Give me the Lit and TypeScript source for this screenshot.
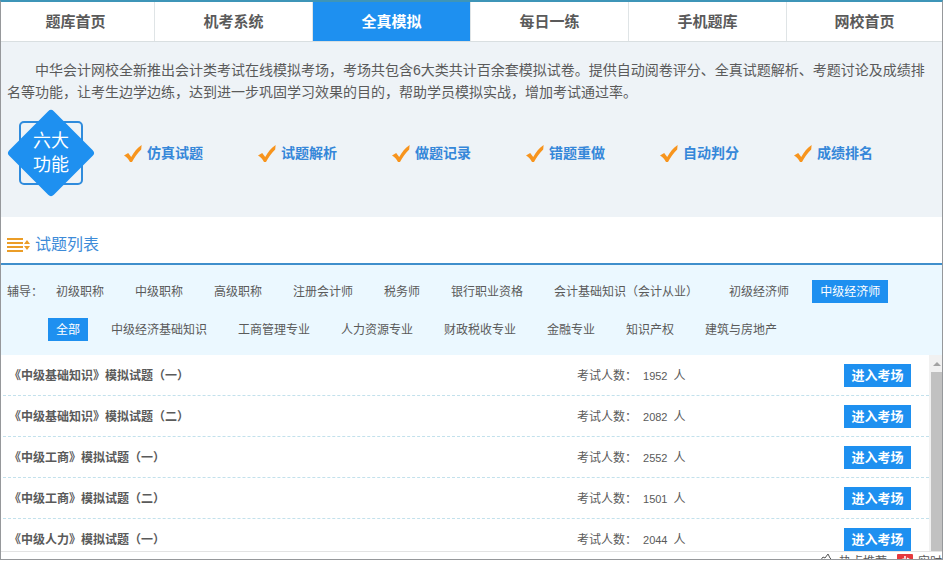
import { LitElement, html, css, svg } from "lit";
import { customElement } from "lit/decorators.js";
import { classMap } from "lit/directives/class-map.js";

const tabs = ["题库首页", "机考系统", "全真模拟", "每日一练", "手机题库", "网校首页"];
const features = ["仿真试题", "试题解析", "做题记录", "错题重做", "自动判分", "成绩排名"];
const courses = [
  "初级职称", "中级职称", "高级职称", "注册会计师", "税务师",
  "银行职业资格", "会计基础知识（会计从业）", "初级经济师", "中级经济师",
];
const subjects = [
  "全部", "中级经济基础知识", "工商管理专业", "人力资源专业",
  "财政税收专业", "金融专业", "知识产权", "建筑与房地产",
];
const exams = [
  { title: "《中级基础知识》模拟试题（一）", count: 1952 },
  { title: "《中级基础知识》模拟试题（二）", count: 2082 },
  { title: "《中级工商》模拟试题（一）", count: 2552 },
  { title: "《中级工商》模拟试题（二）", count: 1501 },
  { title: "《中级人力》模拟试题（一）", count: 2044 },
];

const tick = svg`<path d="M0 10.5 4.2 8 7.2 12 C10 7 13 3 17.6 0 L17.2 4.6 C13.6 8 10.6 12.2 8 17 L6 17 C4.6 14.4 2.6 12 0 10.5Z" fill="#f7941d"/>`;

@customElement("app-root")
export class AppRoot extends LitElement {
  static styles = css`
    :host {
      display: block;
      font: 12px/22px "Liberation Sans", "Noto Sans CJK SC", sans-serif;
      color: #5a5a5a;
      background: #fff;
    }
    a { color: inherit; text-decoration: none; }
    ul { list-style: none; margin: 0; padding: 0; }
    p, h2 { margin: 0; }
    .frame {
      margin-right: 1px;
      border: 1px solid #96989b;
      border-top: 2px solid #3e95b8;
    }
    .tabs {
      display: grid;
      grid-template-columns: 154fr repeat(4, 158fr) 155fr;
      border-bottom: 1px solid #d9dfe1;
    }
    .tab {
      box-sizing: border-box;
      border-right: 1px solid #dfe4e6;
      font-size: 15px;
      font-weight: bold;
      line-height: 39px;
      text-align: center;
    }
    .tab:first-child { padding-right: 4px; }
    .tab:last-child { border-right: 0; }
    .tab.active { background: #1e90f0; color: #fff; }
    .intro { background: #eef3f7; padding: 17px 14px 20px 6px; }
    .lead { font-size: 14px; line-height: 22px; text-indent: 28px; }
    .showcase { display: flex; align-items: center; gap: 29px; margin-top: 6px; }
    .badge { display: grid; flex: none; width: 88px; height: 88px; place-items: center; }
    .badge svg, .badge span { grid-area: 1 / 1; }
    .badge span { color: #fff; font-size: 18px; line-height: 24px; text-align: center; }
    .features { display: flex; flex: 1; }
    .features li {
      display: flex;
      flex: 1;
      align-items: center;
      gap: 5px;
      color: #3587d9;
      font-size: 14px;
      font-weight: bold;
      white-space: nowrap;
    }
    .heading {
      display: flex;
      align-items: center;
      gap: 5px;
      padding: 16px 6px 6px;
      border-bottom: 2px solid #3f8fcc;
      color: #3d8bd8;
      font-size: 16px;
      font-weight: normal;
      line-height: 24px;
    }
    .filters {
      display: grid;
      grid-template-columns: 41px 1fr;
      row-gap: 15px;
      padding: 15px 6px 14px;
      background: #ebf8ff;
    }
    .label { padding-top: 1px; }
    .options { display: flex; gap: 15px; grid-column: 2; white-space: nowrap; }
    .option { display: block; padding: 1px 8px 0; }
    .option.active { background: #1e90f0; color: #fff; }
    .results { display: flex; border-bottom: 1px solid #e3e3e3; }
    .exams { flex: 1; padding-left: 2px; }
    .exam {
      display: grid;
      grid-template-columns: 1fr 267px 67px;
      padding: 9px 18px 8px 6px;
      border-bottom: 1px dashed #c3e1ec;
    }
    .exam:last-child { padding-bottom: 0; border-bottom: 0; }
    .title { padding-top: 1px; font-weight: bold; }
    .count { display: flex; gap: 6px; padding-top: 1px; }
    .number { font-size: 11px; }
    .enter {
      border: 0;
      padding: 0;
      background: #1e90f0;
      color: #fff;
      font: inherit;
      font-size: 13px;
      font-weight: bold;
      cursor: pointer;
    }
    .scroll {
      display: flex;
      flex-direction: column;
      width: 13px;
      padding-left: 2px;
      box-sizing: border-box;
      background: #f1f1f1;
    }
    .arrow { height: 17px; display: grid; place-items: center; }
    .thumb { flex: 1; background: #c1c1c1; }
    .peek {
      display: flex;
      justify-content: flex-end;
      gap: 5px;
      height: 7px;
      overflow: hidden;
      line-height: 20px;
      white-space: nowrap;
    }
    .peek a { display: flex; gap: 5px; }
    .peek .live { margin-left: 5px; width: 45px; }
  `;

  render() {
    return html`
      <div class="frame">
        <nav class="tabs">
          ${tabs.map((t, i) => html`<a href="#" class=${classMap({ tab: true, active: i === 2 })}>${t}</a>`)}
        </nav>
        <section class="intro">
          <p class="lead">中华会计网校全新推出会计类考试在线模拟考场，考场共包含6大类共计百余套模拟试卷。提供自动阅卷评分、全真试题解析、考题讨论及成绩排名等功能，让考生边学边练，达到进一步巩固学习效果的目的，帮助学员模拟实战，增加考试通过率。</p>
          <div class="showcase">
            <div class="badge">
              <svg width="88" height="88" viewBox="0 0 88 88" aria-hidden="true">
                <rect x="13" y="13" width="62" height="62" rx="4" fill="none" stroke="#2f8bdc" stroke-width="2" />
                <rect x="12.5" y="12.5" width="63" height="63" rx="4" fill="#1e90f0" transform="rotate(45 44 44)" />
              </svg>
              <span>六大<br />功能</span>
            </div>
            <ul class="features">
              ${features.map((f) => html`<li><svg width="18" height="17" viewBox="0 0 18 17" aria-hidden="true">${tick}</svg>${f}</li>`)}
            </ul>
          </div>
        </section>
        <h2 class="heading">
          <svg width="23" height="15" viewBox="0 0 23 15" aria-hidden="true">
            <path d="M0 0h16v2H0zM0 4h16v2H0zM0 8h16v2H0zM0 12h16v2H0zM20 2l3 4h-6zM20 12l3-4h-6z" fill="#eb9d27" />
          </svg>
          试题列表
        </h2>
        <div class="filters">
          <span class="label">辅导：</span>
          <ul class="options">
            ${courses.map((c) => html`<li><a href="#" class=${classMap({ option: true, active: c === "中级经济师" })}>${c}</a></li>`)}
          </ul>
          <ul class="options">
            ${subjects.map((s) => html`<li><a href="#" class=${classMap({ option: true, active: s === "全部" })}>${s}</a></li>`)}
          </ul>
        </div>
        <div class="results">
          <ul class="exams">
            ${exams.map((e) => html`
              <li class="exam">
                <span class="title">${e.title}</span>
                <span class="count"><span>考试人数：</span><span class="number">${e.count}</span><span>人</span></span>
                <button class="enter" type="button">进入考场</button>
              </li>`)}
          </ul>
          <div class="scroll" aria-hidden="true">
            <div class="arrow"><svg width="8" height="4" viewBox="0 0 8 4"><path d="M4 0l4 4H0z" fill="#a3a3a3" /></svg></div>
            <div class="thumb"></div>
          </div>
        </div>
        <div class="peek">
          <a href="#">
            <svg width="15" height="14" viewBox="0 0 15 14" aria-hidden="true">
              <path d="M1 9 4 5l2 1 3-4 2 4 3 3v5H1z" fill="none" stroke="#555" />
            </svg>热点推荐</a>
          <a href="#" class="live">
            <svg width="16" height="14" viewBox="0 0 16 14" aria-hidden="true">
              <rect y="2" width="16" height="12" rx="1" fill="#e6393d" />
              <path d="M8 4v6M4 8l3-1M10 6l3 2" stroke="#fff" stroke-width="1.5" />
            </svg>实时</a>
        </div>
      </div>
    `;
  }
}
